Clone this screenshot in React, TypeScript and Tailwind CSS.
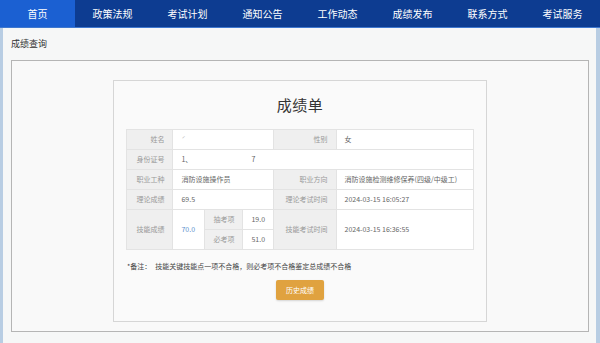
import React from "react";

const navItems = ["首页", "政策法规", "考试计划", "通知公告", "工作动态", "成绩发布", "联系方式", "考试服务"];

const L = "bg-[#efefef] text-[#9a9a9a] text-right pr-[8px] border border-[#e3e3e3]";
const V = "bg-white text-[#666] text-left pl-[8px] border border-[#e3e3e3]";

export default function App() {
  return (
    <div
      className="w-[600px] h-[343px] overflow-hidden bg-[#f4f6f6] flex flex-col"
      style={{ fontFamily: '"Noto Sans CJK SC", "Noto Sans", sans-serif' }}
    >
      <div className="h-[28px] bg-[#0d3c91] flex border-b border-[#3f78cf] shrink-0">
        {navItems.map((t, i) => (
          <div
            key={t}
            className={`w-[75px] text-center text-[10px] leading-[28px] text-white ${i === 0 ? "bg-[#1b60d2]" : ""}`}
          >
            {t}
          </div>
        ))}
      </div>
      <div className="flex-1 flex flex-col border-l-[3px] border-r-[4px] border-[#b8cde3] bg-[#f6f7f7]">
        <div className="pl-[8px] pt-[9px] text-[9px] leading-[14px] text-[#333]">成绩查询</div>
        <div className="ml-[8px] mr-[7px] mt-[9px] h-[272px] border border-[#b5b5b5] bg-[#f9f9f9] flex justify-center pt-[19px]">
          <div className="w-[374px] h-[242px] border border-[#d6d6d6] bg-[#fafafa] flex flex-col items-center">
            <div className="mt-[14px] text-[15px] leading-[20px] text-[#333] tracking-[0.5px]">成绩单</div>
            <table className="mt-[14px] w-[346px] border-collapse text-[7px] table-fixed">
              <colgroup>
                <col className="w-[46px]" />
                <col className="w-[32px]" />
                <col className="w-[38px]" />
                <col className="w-[30px]" />
                <col className="w-[63px]" />
                <col className="w-[137px]" />
              </colgroup>
              <tbody>
                <tr className="h-[20px]">
                  <td className={L}>姓名</td>
                  <td className={V} colSpan={3}><span className="text-[#bbb]">ˊ</span></td>
                  <td className={L}>性别</td>
                  <td className={V}>女</td>
                </tr>
                <tr className="h-[20px]">
                  <td className={L}>身份证号</td>
                  <td className={V} colSpan={5}>
                    <span>1、</span>
                    <span className="ml-[59px]">7</span>
                  </td>
                </tr>
                <tr className="h-[20px]">
                  <td className={L}>职业工种</td>
                  <td className={V} colSpan={3}>消防设施操作员</td>
                  <td className={L}>职业方向</td>
                  <td className={V}>消防设施检测维修保养(四级/中级工)</td>
                </tr>
                <tr className="h-[20px]">
                  <td className={L}>理论成绩</td>
                  <td className={V} colSpan={3}>69.5</td>
                  <td className={L}>理论考试时间</td>
                  <td className={V}>2024-03-15 16:05:27</td>
                </tr>
                <tr className="h-[20px]">
                  <td className={L} rowSpan={2}>技能成绩</td>
                  <td className={`${V} !text-[#5b8fce]`} rowSpan={2}>70.0</td>
                  <td className="bg-[#f0f0f0] text-[#9a9a9a] text-center border border-[#e3e3e3]">抽考项</td>
                  <td className={V}>19.0</td>
                  <td className={L} rowSpan={2}>技能考试时间</td>
                  <td className={V} rowSpan={2}>2024-03-15 16:36:55</td>
                </tr>
                <tr className="h-[20px]">
                  <td className="bg-[#f0f0f0] text-[#9a9a9a] text-center border border-[#e3e3e3]">必考项</td>
                  <td className={V}>51.0</td>
                </tr>
              </tbody>
            </table>
            <div className="w-[346px] mt-[10px] text-[7px] leading-[12px] text-[#444]">
              *备注：<span className="ml-[4px]">技能关键技能点一项不合格，则必考项不合格鉴定总成绩不合格</span>
            </div>
            <div className="mt-[8px] w-[48px] h-[20px] rounded-[2px] bg-[#e0a23f] text-white text-[7px] flex items-center justify-center shadow-[0_1px_2px_rgba(0,0,0,0.15)]">
              历史成绩
            </div>
          </div>
        </div>
      </div>
    </div>
  );
}
